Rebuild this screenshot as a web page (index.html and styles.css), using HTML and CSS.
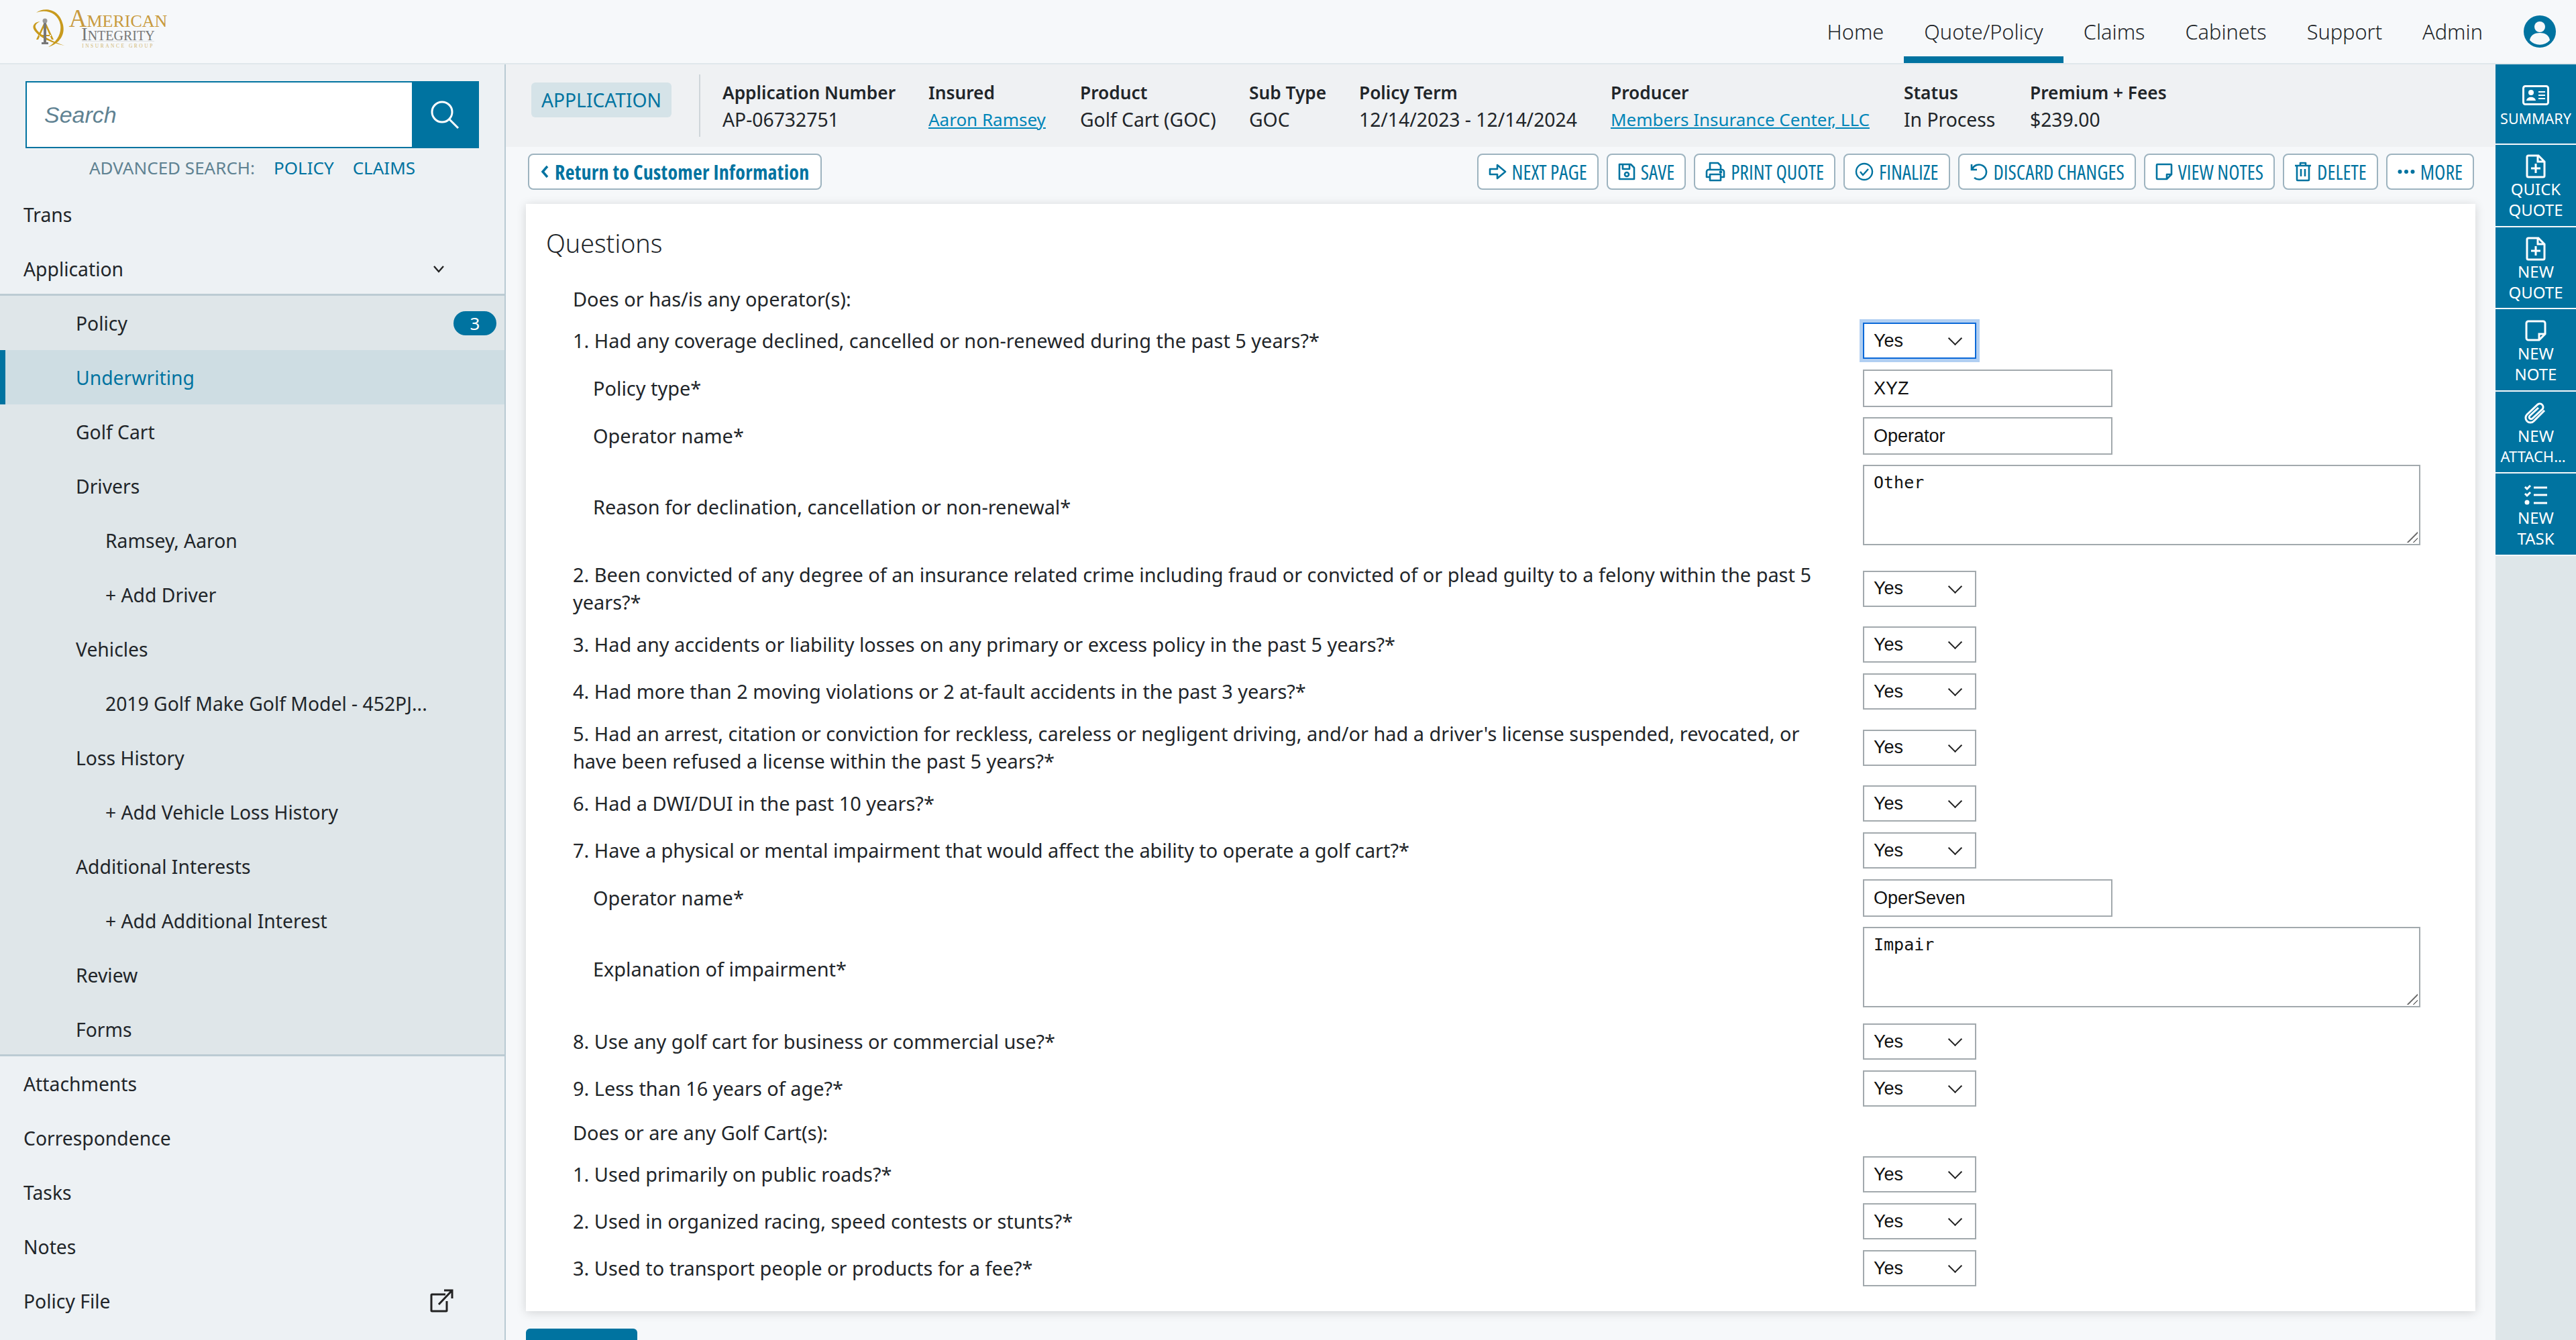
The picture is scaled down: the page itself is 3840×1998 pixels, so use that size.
FILE: index.html
```html
<!DOCTYPE html>
<html lang="en">
<head>
    <meta charset="UTF-8">
    <title>Application - Questions</title>
    <link rel="stylesheet" href="styles.css">
</head>
<body>
    <header class="topbar">
        <div class="logo">
            <svg class="logo-mark" viewBox="0 0 56 58" width="56" height="58">
                <path d="M14 6C24-2 48-2 54 24 58 42 44 54 32 57 44 50 52 38 50 24 47 6 28 0 14 6z" fill="#c89a1d"/>
                <path d="M10 30C8 24 12 20 20 19 15 21 12 24 13 28 16 36 30 46 56 55 34 50 16 42 10 30z" fill="#c89a1d"/>
                <path d="M27 18 14 46h3l10-22 10 22h3zM18 39h18v2H18z" fill="#c89a1d"/>
                <path d="M25 20h4v30h3v3H22v-3h3z" fill="#777"/>
                <circle cx="27" cy="18" r="3.500" fill="#999"/>
            </svg>
            <div class="logo-text">
                <span class="logo-a">American</span>
                <span class="logo-b">Integrity</span>
                <span class="logo-c">INSURANCE GROUP</span>
            </div>
        </div>
        <nav class="topnav">
            <a>Home</a>
            <a class="active">Quote/Policy</a>
            <a>Claims</a>
            <a>Cabinets</a>
            <a>Support</a>
            <a>Admin</a>
            <svg class="user-icon" viewBox="0 0 48 48" width="48" height="48">
                <circle cx="24" cy="24" r="24" fill="#0073a0"/>
                <circle cx="24" cy="17" r="8" fill="#f6f8fa"/>
                <path d="M9 37c1-8 8-11 15-11s14 3 15 11a20 20 0 0 1-30 0z" fill="#f6f8fa"/>
            </svg>
        </nav>
    </header>
    <div class="layout">
        <aside class="sidebar">
            <div class="search">
                <div class="search-input">Search</div>
                <div class="search-btn">
                    <svg viewBox="0 0 44 44" width="44" height="44" fill="none" stroke="#fff" stroke-width="3"><circle cx="18" cy="18" r="15"/><path d="M29 29l13 13"/></svg>
                </div>
            </div>
            <div class="adv-search"><span>ADVANCED SEARCH:</span><a>POLICY</a><a>CLAIMS</a></div>
            <ul class="menu">
                <li>Trans</li>
                <li>Application <svg class="caret" viewBox="0 0 20 20" width="20" height="20" fill="none" stroke="#222" stroke-width="2.4"><path d="M3 6l7 8 7-8"/></svg></li>
            </ul>
            <ul class="menu sub">
                <li class="lvl1">Policy <span class="badge">3</span></li>
                <li class="lvl1 current">Underwriting</li>
                <li class="lvl1">Golf Cart</li>
                <li class="lvl1">Drivers</li>
                <li class="lvl2">Ramsey, Aaron</li>
                <li class="lvl2">+ Add Driver</li>
                <li class="lvl1">Vehicles</li>
                <li class="lvl2">2019 Golf Make Golf Model - 452PJ...</li>
                <li class="lvl1">Loss History</li>
                <li class="lvl2">+ Add Vehicle Loss History</li>
                <li class="lvl1">Additional Interests</li>
                <li class="lvl2">+ Add Additional Interest</li>
                <li class="lvl1">Review</li>
                <li class="lvl1">Forms</li>
            </ul>
            <ul class="menu">
                <li>Attachments</li>
                <li>Correspondence</li>
                <li>Tasks</li>
                <li>Notes</li>
                <li>Policy File <svg viewBox="0 0 36 36" width="36" height="36" fill="none" stroke="#222" stroke-width="3"><path d="M24 8H4a1 1 0 0 0-1 1v23a1 1 0 0 0 1 1h21a1 1 0 0 0 1-1V18M14 23 33 3M22 2h12v12"/></svg></li>
            </ul>
        </aside>
        <main class="content">
            <section class="summary">
                <div class="tag">APPLICATION</div>
                <div class="facts">
                    <div class="fact f1"><b>Application Number</b><span>AP-06732751</span></div>
                    <div class="fact f2"><b>Insured</b><a>Aaron Ramsey</a></div>
                    <div class="fact f3"><b>Product</b><span>Golf Cart (GOC)</span></div>
                    <div class="fact f4"><b>Sub Type</b><span>GOC</span></div>
                    <div class="fact f5"><b>Policy Term</b><span>12/14/2023 - 12/14/2024</span></div>
                    <div class="fact f6"><b>Producer</b><a>Members Insurance Center, LLC</a></div>
                    <div class="fact f7"><b>Status</b><span>In Process</span></div>
                    <div class="fact f8"><b>Premium + Fees</b><span>$239.00</span></div>
                </div>
            </section>
            <div class="actions">
                <button class="btn back"><svg viewBox="0 0 12 20" width="12" height="20" fill="none" stroke="#0073a0" stroke-width="3.5"><path d="M10 2 3 10l7 8"/></svg>Return to Customer Information</button>
                <div class="action-group">
                    <button class="btn"><svg viewBox="0 0 27 26" width="27" height="26" fill="none" stroke="#0073a0" stroke-width="2.6" stroke-linejoin="round"><path d="M2 9h11V3l12 10-12 10v-6H2z"/></svg>NEXT PAGE</button>
                    <button class="btn"><svg viewBox="0 0 26 26" width="26" height="26" fill="none" stroke="#0073a0" stroke-width="2.6" stroke-linejoin="round"><path d="M2 2h17l5 5v17H2zM7 2v7h10V2"/><circle cx="13" cy="17" r="3"/></svg>SAVE</button>
                    <button class="btn"><svg viewBox="0 0 30 30" width="30" height="30" fill="none" stroke="#0073a0" stroke-width="2.6" stroke-linejoin="round"><path d="M7 12V2h12l4 4v6M7 23H2v-8a3 3 0 0 1 3-3h20a3 3 0 0 1 3 3v8h-5M7 19h16v9H7z"/><circle cx="23" cy="15.500" r="1" fill="#0073a0"/></svg>PRINT QUOTE</button>
                    <button class="btn"><svg viewBox="0 0 28 28" width="28" height="28" fill="none" stroke="#0073a0" stroke-width="2.4"><circle cx="14" cy="14" r="12"/><path d="M8 14l4 5 8-9"/></svg>FINALIZE</button>
                    <button class="btn"><svg viewBox="0 0 28 28" width="28" height="28" fill="none" stroke="#0073a0" stroke-width="2.6"><path d="M3 3v8h8M4 10a11 11 0 1 1 3 13"/></svg>DISCARD CHANGES</button>
                    <button class="btn"><svg viewBox="0 0 26 26" width="26" height="26" fill="none" stroke="#0073a0" stroke-width="2.6" stroke-linejoin="round"><path d="M3 2h20a1 1 0 0 1 1 1v14l-7 7H3a1 1 0 0 1-1-1V3a1 1 0 0 1 1-1zM24 17h-7v7"/></svg>VIEW NOTES</button>
                    <button class="btn"><svg viewBox="0 0 26 30" width="26" height="30" fill="none" stroke="#0073a0" stroke-width="2.6" stroke-linejoin="round"><path d="M1 6h24M9 6V2h8v4M4 6v21a1 1 0 0 0 1 1h16a1 1 0 0 0 1-1V6M10 11v11M16 11v11"/></svg>DELETE</button>
                    <button class="btn"><svg viewBox="0 0 26 8" width="26" height="8" fill="#0073a0"><circle cx="3.500" cy="4" r="3"/><circle cx="13" cy="4" r="3"/><circle cx="22.500" cy="4" r="3"/></svg>MORE</button>
                </div>
            </div>
            <section class="card">
                <h2>Questions</h2>
                <div class="heading-row">Does or has/is any operator(s):</div>
                <div class="row"><label>1. Had any coverage declined, cancelled or non-renewed during the past 5 years?*</label><div class="select focus">Yes</div></div>
                <div class="row indent"><label>Policy type*</label><div class="input">XYZ</div></div>
                <div class="row indent"><label>Operator name*</label><div class="input">Operator</div></div>
                <div class="row indent area"><label>Reason for declination, cancellation or non-renewal*</label><div class="textarea">Other</div></div>
                <div class="row"><label>2. Been convicted of any degree of an insurance related crime including fraud or convicted of or plead guilty to a felony within the past 5 years?*</label><div class="select">Yes</div></div>
                <div class="row"><label>3. Had any accidents or liability losses on any primary or excess policy in the past 5 years?*</label><div class="select">Yes</div></div>
                <div class="row"><label>4. Had more than 2 moving violations or 2 at-fault accidents in the past 3 years?*</label><div class="select">Yes</div></div>
                <div class="row"><label>5. Had an arrest, citation or conviction for reckless, careless or negligent driving, and/or had a driver's license suspended, revocated, or have been refused a license within the past 5 years?*</label><div class="select">Yes</div></div>
                <div class="row"><label>6. Had a DWI/DUI in the past 10 years?*</label><div class="select">Yes</div></div>
                <div class="row"><label>7. Have a physical or mental impairment that would affect the ability to operate a golf cart?*</label><div class="select">Yes</div></div>
                <div class="row indent"><label>Operator name*</label><div class="input">OperSeven</div></div>
                <div class="row indent area"><label>Explanation of impairment*</label><div class="textarea">Impair</div></div>
                <div class="row"><label>8. Use any golf cart for business or commercial use?*</label><div class="select">Yes</div></div>
                <div class="row"><label>9. Less than 16 years of age?*</label><div class="select">Yes</div></div>
                <div class="heading-row">Does or are any Golf Cart(s):</div>
                <div class="row"><label>1. Used primarily on public roads?*</label><div class="select">Yes</div></div>
                <div class="row"><label>2. Used in organized racing, speed contests or stunts?*</label><div class="select">Yes</div></div>
                <div class="row"><label>3. Used to transport people or products for a fee?*</label><div class="select">Yes</div></div>
            </section>
            <div class="next-btn"></div>
        </main>
        <aside class="quickbar">
            <a class="quick q-first"><span class="q-icon"><svg viewBox="0 0 40 30" width="40" height="30" fill="none" stroke="#fff" stroke-width="3"><rect x="1.500" y="1.500" width="37" height="27" rx="3"/><circle cx="13" cy="11" r="4" fill="#fff" stroke="none"/><path d="M6 23c1-7 13-7 14 0z" fill="#fff" stroke="none"/><path d="M24 10h10M24 15h10M24 20h10" stroke-width="2"/></svg></span><span class="q-text">SUMMARY</span></a>
            <a class="quick"><span class="q-icon"><svg viewBox="0 0 30 36" width="30" height="36" fill="none" stroke="#fff" stroke-width="3"><path d="M4 2h15l9 9v21a2 2 0 0 1-2 2H4a2 2 0 0 1-2-2V4a2 2 0 0 1 2-2zM18 2v9h10M15 14v14M8 21h14"/></svg></span>QUICK<br>QUOTE</a>
            <a class="quick"><span class="q-icon"><svg viewBox="0 0 30 36" width="30" height="36" fill="none" stroke="#fff" stroke-width="3"><path d="M4 2h15l9 9v21a2 2 0 0 1-2 2H4a2 2 0 0 1-2-2V4a2 2 0 0 1 2-2zM18 2v9h10M15 14v14M8 21h14"/></svg></span>NEW<br>QUOTE</a>
            <a class="quick"><span class="q-icon"><svg viewBox="0 0 32 32" width="32" height="32" fill="none" stroke="#fff" stroke-width="3"><path d="M5 2h22a3 3 0 0 1 3 3v16l-9 9H5a3 3 0 0 1-3-3V5a3 3 0 0 1 3-3zM30 21h-9v9"/></svg></span>NEW<br>NOTE</a>
            <a class="quick"><span class="q-icon"><svg viewBox="0 0 34 34" width="34" height="34" fill="none" stroke="#fff" stroke-width="3"><path d="M30 13 14 29a7 7 0 0 1-10-10L20 4a5 5 0 0 1 7 7L12 25a2.500 2.500 0 0 1-4-4L21 9"/></svg></span>NEW<br><span class="clip">ATTACH…</span></a>
            <a class="quick"><span class="q-icon"><svg viewBox="0 0 36 32" width="36" height="32" fill="none" stroke="#fff" stroke-width="3"><path d="M15 5h20M15 16h20M15 28h20M2 4l3 3 5-5M2 14l3 3 5-5"/><circle cx="5" cy="27" r="3.500" fill="#fff" stroke="none"/></svg></span>NEW<br>TASK</a>
        </aside>
    </div>
</body>
</html>
```

FILE: styles.css
```css
* { box-sizing: border-box; }
html, body { margin: 0; height: 1998px; overflow: hidden; }
body { font-family: "Noto Sans", sans-serif; font-size: 28.3px; color: #212529; background: #f6f8fa; }
a { color: inherit; }

.topbar { height: 96px; display: flex; justify-content: space-between; background: #f6f8fa; border-bottom: 2px solid #e0e7eb; }
.logo { display: flex; align-items: flex-start; padding: 13px 0 0 40px; gap: 7px; }
.logo-text { display: flex; flex-direction: column; align-items: center; width: 146px; font-family: "Liberation Serif", serif; line-height: 1; }
.logo-a { font-size: 37px; line-height: 29px; color: #c89a3d; font-variant: small-caps; white-space: nowrap; }
.logo-b { font-size: 28px; line-height: 18px; color: #777; font-variant: small-caps; }
.logo-c { font-size: 7.500px; line-height: 10px; color: #d2b878; letter-spacing: 2.500px; white-space: nowrap; border-top: 1px solid #dfe2e4; padding-top: 2px; margin-top: 1px; }
.topnav { display: flex; align-items: stretch; padding-right: 30px; font-weight: 300; font-size: 30.7px; }
.topnav a { display: flex; align-items: center; padding: 0 30px; border-bottom: 10px solid transparent; border-top: 10px solid transparent; }
.topnav a.active { border-bottom-color: #0073a0; }
.user-icon { align-self: center; margin-left: 31px; }

.layout { display: flex; height: 1902px; }
.sidebar { width: 754px; flex: none; background: #edf1f4; border-right: 2px solid #b9cad3; padding-top: 25px; }
.search { display: flex; height: 100px; margin: 0 38px; border: 2px solid #0073a0; background: #fff; }
.search-input { flex: 1; padding: 0 26px; display: flex; align-items: center; font-family: "Liberation Sans", sans-serif; font-style: italic; font-size: 34px; color: #5f8292; }
.search-btn { width: 98px; background: #0073a0; display: flex; align-items: center; justify-content: center; }
.adv-search { display: flex; justify-content: center; gap: 28px; margin: 2px 0; height: 54px; align-items: center; font-size: 26px; color: #5f8292; }
.adv-search a { color: #0073a0; }
.menu { list-style: none; margin: 0; padding: 0; }
.menu li { height: 81px; padding: 0 76px 0 35px; display: flex; align-items: center; justify-content: space-between; }
.caret { margin-right: 12px; }
.sub { background: #dfe6e9; box-shadow: 0 -3px 0 #bccbd3, inset 0 -3px 0 #bccbd3; }
.menu li.lvl1 { padding-left: 113px; padding-right: 12px; }
.menu li.lvl2 { padding-left: 157px; }
.menu li.current { color: #0073a0; background: #cedde3; border-left: 8px solid #0073a0; padding-left: 105px; }
.badge { min-width: 64px; height: 36px; border-radius: 18px; background: #0073a0; color: #fff; font-size: 26px; display: flex; align-items: center; justify-content: center; }

.content { flex: 1; min-width: 0; }
.summary { height: 123px; display: flex; align-items: center; background: #eff1f3; padding-left: 38px; }
.tag { height: 52px; padding: 0 15px; display: flex; align-items: center; border-radius: 6px; background: #d5e3e8; color: #0073a0; font-size: 28.2px; margin-top: -17px; }
.facts { display: flex; height: 93px; margin-left: 41px; padding: 8px 0 0 33px; border-left: 2px solid #cfd6da; }
.fact { display: flex; flex-direction: column; white-space: nowrap; line-height: 39.5px; }
.fact b { font-weight: 600; font-size: 26.3px; }
.fact a { color: #0085b8; text-decoration: underline; font-size: 26px; }
.f1 { width: 307px; } .f2 { width: 226px; } .f3 { width: 252px; } .f4 { width: 164px; }
.f5 { width: 375px; } .f6 { width: 437px; } .f7 { width: 188px; }

.actions { height: 85px; display: flex; justify-content: space-between; align-items: flex-start; padding: 10px 32px 0 33px; }
.action-group { display: flex; gap: 12px; }
.btn { height: 54px; padding: 0 15px; display: flex; align-items: center; gap: 8px; background: #fff; border: 2px solid #9db3bf; border-radius: 8px; color: #0073a0; font-family: "Open Sans", sans-serif; font-size: 30px; font-stretch: 75%; white-space: nowrap; }
.btn.back { padding: 0 16px 0 17px; gap: 9px; font-weight: 700; letter-spacing: .3px; }

.card { width: 2906px; height: 1651px; margin-left: 30px; background: #fff; box-shadow: 0 2px 14px rgba(0,0,0,.15); padding: 31px 30px 0; font-size: 28.9px; }
.card h2 { margin: 0; font-size: 37.6px; font-weight: 300; line-height: 56px; height: 88px; }
.heading-row { height: 46px; line-height: 46px; padding-left: 40px; margin-bottom: 12px; }
.row { display: flex; align-items: center; padding-left: 40px; margin-bottom: 16px; }
.row.indent { margin-bottom: 15px; }
.row.area { margin-bottom: 24px; }
.row label { width: 1923px; flex: none; line-height: 40.5px; padding-right: 40px; }
.row.indent label { padding-left: 30px; }
.row.area label { padding-top: 6px; }
.select, .input, .textarea { border: 2px solid #a2a9ad; background: #fff; font-family: "Liberation Sans", sans-serif; font-size: 27px; padding-left: 14px; display: flex; align-items: center; color: #111; }
.select { width: 169px; height: 54px; position: relative; }
.select::after { content: ""; position: absolute; right: 22px; top: 14px; width: 13px; height: 13px; border-right: 2px solid #222; border-bottom: 2px solid #222; transform: rotate(45deg); }
.select.focus { border-color: #0a68d8; outline: 5px solid #b1cff2; }
.input { width: 372px; height: 56px; }
.textarea { width: 831px; height: 120px; align-items: flex-start; padding-top: 10px; font-family: "DejaVu Sans Mono", monospace; font-size: 25px; position: relative; }
.textarea::after { content: ""; position: absolute; right: 2px; bottom: 2px; width: 18px; height: 18px; background: linear-gradient(135deg, transparent 55%, #777 55%, #777 62%, transparent 62%, transparent 78%, #777 78%, #777 85%, transparent 85%); }
.next-btn { width: 166px; height: 30px; margin: 26px 0 0 30px; background: #0073a0; border-radius: 6px 6px 0 0; }

.quickbar { width: 120px; flex: none; display: flex; flex-direction: column; margin-left: auto; background: #dee6e9; }
.quick { height: 122.6px; background: #0073a0; border-bottom: 2px solid #f6f8fa; color: #fff; font-size: 24px; line-height: 31px; text-align: center; display: flex; flex-direction: column; align-items: center; padding-top: 14px; }
.q-icon { height: 36px; display: flex; align-items: center; }
.q-first { height: 120px; padding-top: 28px; }
.q-text { font-size: 21.5px; margin-top: 1px; }
.clip { margin-right: 8px; font-size: 22px; white-space: nowrap; }
```
